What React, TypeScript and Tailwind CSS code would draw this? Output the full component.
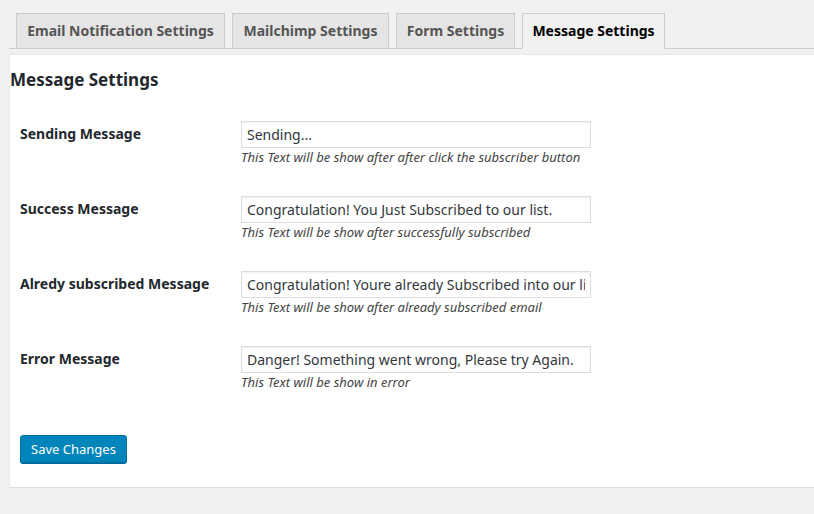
const tabs = [
  { label: 'Email Notification Settings', width: 'w-[209px]', active: false },
  { label: 'Mailchimp Settings', width: 'w-[157px]', active: false },
  { label: 'Form Settings', width: 'w-[119px]', active: false },
  { label: 'Message Settings', width: 'w-[143px]', active: true },
];

const rows = [
  {
    label: 'Sending Message',
    value: 'Sending...',
    help: 'This Text will be show after after click the subscriber button',
  },
  {
    label: 'Success Message',
    value: 'Congratulation! You Just Subscribed to our list.',
    help: 'This Text will be show after successfully subscribed',
  },
  {
    label: 'Alredy subscribed Message',
    value: 'Congratulation! Youre already Subscribed into our list.',
    help: 'This Text will be show after already subscribed email',
  },
  {
    label: 'Error Message',
    value: 'Danger! Something went wrong, Please try Again.',
    help: 'This Text will be show in error',
  },
];

export default function App() {
  return (
    <div
      className="min-h-screen w-[814px] overflow-hidden bg-[#f1f1f1] pt-[13px]"
      style={{ fontFamily: '"Noto Sans", "Open Sans", sans-serif' }}
    >
      <nav className="ml-[9px] flex gap-[7px] border-b border-[#ccc] pl-[7px]">
        {tabs.map((tab) => (
          <div
            key={tab.label}
            className={`${tab.width} ${
              tab.active
                ? '-mb-px border border-[#ccc] border-b-[#f1f1f1] bg-[#f1f1f1] text-center text-[14px] font-bold leading-[34px] whitespace-nowrap text-black'
                : '-mb-px border border-[#ccc] bg-[#e5e5e5] text-center text-[14px] font-bold leading-[34px] whitespace-nowrap text-[#555]'
            }`}
          >
            {tab.label}
          </div>
        ))}
      </nav>

      <div className="ml-[10px] mt-[5px] h-[433px] border-t border-[#e5e5e5] bg-white shadow-[0_1px_1px_rgba(0,0,0,0.08)]">
        <h2 className="pt-[13px] text-[17px] font-bold leading-[24px] text-[#23282d]">Message Settings</h2>

        <div className="mt-[29px] flex flex-col gap-[30px] pl-[10px]">
          {rows.map((row) => (
            <div key={row.label} className="flex items-start">
              <div className="w-[221px] pt-[3px] text-[14px] font-bold leading-[20px] text-[#23282d]">
                {row.label}
              </div>
              <div>
                <input
                  type="text"
                  readOnly
                  value={row.value}
                  className="h-[27px] w-[350px] border border-[#ddd] bg-white px-[5px] text-[14px] text-[#32373c] shadow-[inset_0_1px_2px_rgba(0,0,0,0.07)] outline-none"
                  style={{ fontFamily: '"Noto Sans", sans-serif' }}
                />
                <p className="text-[13px] italic leading-[18px] text-[#444]">{row.help}</p>
              </div>
            </div>
          ))}
        </div>

        <button className="ml-[10px] mt-[44px] h-[28px] w-[107px] rounded-[3px] border border-[#0073aa] bg-[#0085ba] text-[13px] leading-[26px] text-white shadow-[0_1px_0_#006799]">
          Save Changes
        </button>
      </div>
    </div>
  );
}
